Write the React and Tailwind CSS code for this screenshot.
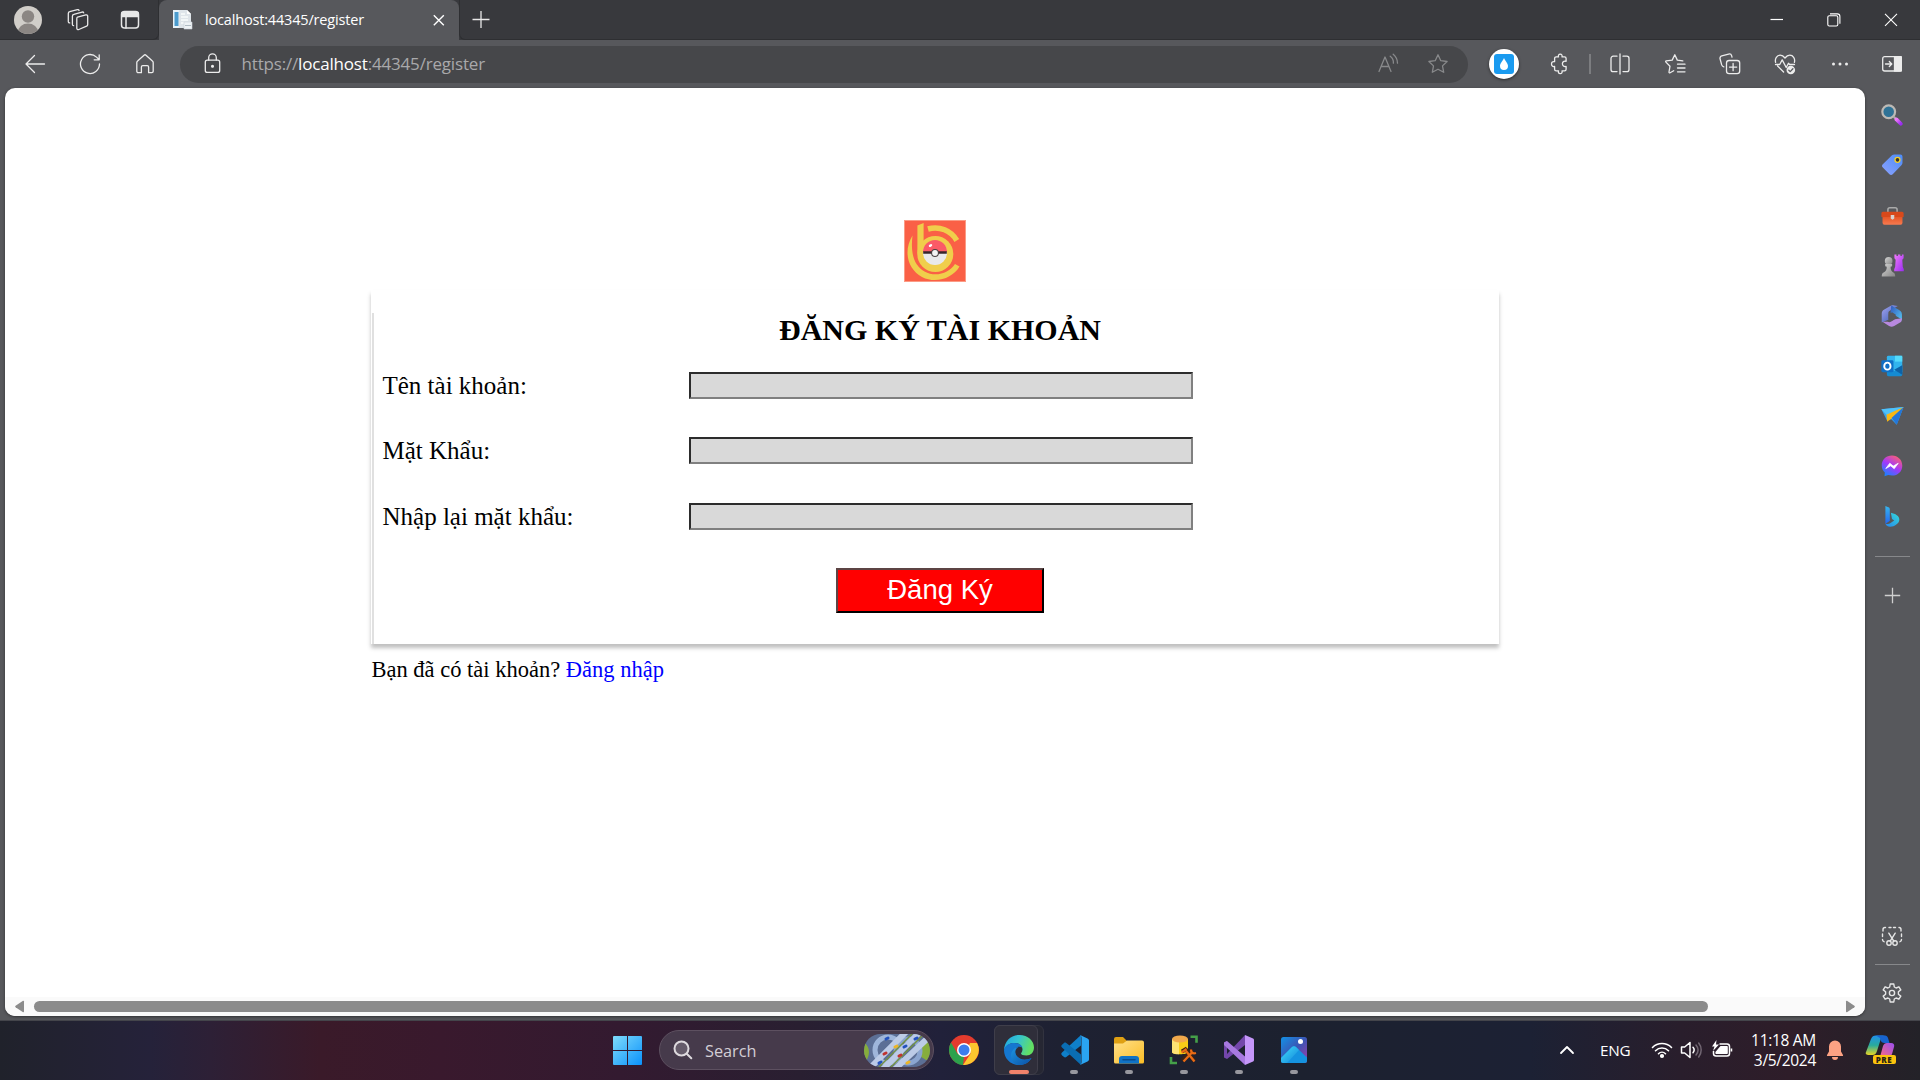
import React from "react";

const Line = ({ size = 22, w = 1.3, children, className = "" }) => (
  <svg width={size} height={size} viewBox="0 0 22 22" fill="none" stroke="currentColor" strokeWidth={w} strokeLinecap="round" strokeLinejoin="round" className={"shrink-0 block " + className}>
    {children}
  </svg>
);

const Art = ({ size = 22, children, className = "" }) => (
  <svg width={size} height={size} viewBox="0 0 30 30" className={"shrink-0 block " + className}>
    {children}
  </svg>
);

const STAR = "M11 1.8l2.8 5.9 6.3.8-4.6 4.4 1.2 6.4L11 16.2l-5.7 3.1 1.2-6.4L1.9 8.5l6.3-.8z";

function TitleBar() {
  return (
    <header className="flex h-10 shrink-0 bg-[#38393d] text-[#e8e8e8]">
      <div className="flex w-[159px] shrink-0 items-center rounded-br-[6px] border-b border-r border-[#2e2f32] pl-[14px]">
        <svg width="28" height="28" viewBox="0 0 28 28" className="block">
          <defs><clipPath id="av"><circle cx="14" cy="14" r="14" /></clipPath></defs>
          <g clipPath="url(#av)">
            <rect width="28" height="28" fill="#d1cec9" />
            <circle cx="14" cy="10.5" r="6.2" fill="#8b8683" />
            <ellipse cx="14" cy="26" rx="10" ry="8.4" fill="#8b8683" />
          </g>
        </svg>
        <Line className="ml-[24.500px]">
          <path d="M10.5 8.1l8.3-2.2c1-.2 1.9.3 1.9 1.2v8.4c0 .8-.4 1.4-1.1 1.7l-7.8 3.3c-1 .4-2-.1-2-1.2V9.700c0-.8.2-1.400.7-1.600z" />
          <path d="M6.600 16.700c-.8 0-1.200-.600-1.200-1.500V7.200c0-1 .5-1.700 1.400-1.900l8.200-2.200c.8-.2 1.500.1 1.700.8" />
          <path d="M2.700 13.900c-.9 0-1.400-.600-1.400-1.500V4.600c0-1 .5-1.700 1.400-1.900l7.700-2c.8-.2 1.500.1 1.700.8" />
        </Line>
        <Line className="ml-[30.500px]" w={1.5}>
          <rect x="2.500" y="2.500" width="17" height="16.500" rx="3" />
          <path d="M3 3.500h16v4H3z" fill="currentColor" />
          <path d="M7 7v12" />
        </Line>
      </div>
      <div className="flex w-[300px] shrink-0 items-center rounded-t-[8px] bg-[#57585c] pl-[13px]">
        <svg width="22" height="22" viewBox="0 0 22 22" className="block">
          <path d="M1 1h9v18H1z" fill="#e8f2f8" />
          <path d="M2.500 3h4v14h-4z" fill="#4b9bcd" />
          <path d="M7 1h8l4 4v14H7z" fill="#dfe5ea" />
          <path d="M15 1l4 4h-4z" fill="#fff" />
          <path d="M9 5h4M9 8h7M9 11h7M9 14h3" stroke="#f9fbfc" strokeWidth="1.500" />
          <path d="M12 13h8v7h-8z" fill="#eef2f5" stroke="#c9d2d9" strokeWidth=".6" />
          <path d="M13 16.500h6" stroke="#aebac2" />
        </svg>
        <span className="ml-[11px] w-[212px] whitespace-nowrap font-['Open_Sans',sans-serif] text-[14.500px] leading-5 tracking-[-0.170px] text-white">localhost:44345/register</span>
        <svg width="14" height="14" viewBox="0 0 14 14" className="ml-[15px] block" stroke="#fff" strokeWidth="1.400"><path d="M1.800 2.300l10 10M11.800 2.300l-10 10" /></svg>
      </div>
      <div className="flex flex-1 items-center rounded-bl-[6px] border-b border-l border-[#2e2f32] pl-[10.500px]">
        <svg width="20" height="20" viewBox="0 0 20 20" stroke="#e8e8e8" strokeWidth="1.300"><path d="M1.500 9.500h17M10 1v17" /></svg>
        <div className="ml-auto mr-px flex h-full">
          <div className="flex w-[57px] items-center justify-center"><svg width="14" height="14" viewBox="0 0 14 14"><path d="M.5 6.500h12.500" stroke="#fff" strokeWidth="1.200" /></svg></div>
          <div className="flex w-[57px] items-center justify-center"><svg width="14" height="14" viewBox="0 0 14 14" fill="none" stroke="#fff" strokeWidth="1.100"><rect x=".8" y="2.800" width="10" height="10.200" rx="1.500" /><path d="M3 .9h7.300a2.600 2.600 0 0 1 2.600 2.600v7.200" /></svg></div>
          <div className="flex w-[57px] items-center justify-center"><svg width="14" height="14" viewBox="0 0 14 14" stroke="#fff" strokeWidth="1.100"><path d="M1 .8l12 12M13 .8l-12 12" /></svg></div>
        </div>
      </div>
    </header>
  );
}

const Cell = ({ children }) => <div className="flex w-[55px] shrink-0 items-center justify-center">{children}</div>;

function ToolBar() {
  return (
    <div className="flex h-12 shrink-0 items-center bg-[#57585c] text-[#ececec]">
      <div className="flex w-[180px] shrink-0 items-center pl-[24px]">
        <Line><path d="M2 11h18.500M10.500 2.500L2 11l8.500 8.500" /></Line>
        <Line className="ml-[33px]"><path d="M20.500 11a9.500 9.500 0 1 1-3-6.900l2.700 2.700M20.200 1.800v5h-5" /></Line>
        <Line className="ml-[33px]"><path d="M2.800 9.600c0-.7.300-1.300.8-1.700l6.400-5.700c.6-.5 1.400-.5 2 0l6.400 5.700c.5.400.8 1 .8 1.700v8.700c0 .8-.6 1.400-1.400 1.400h-3.200V14c0-.8-.6-1.400-1.400-1.400H8.800c-.8 0-1.400.6-1.400 1.400v5.700H4.200c-.8 0-1.400-.6-1.400-1.400z" /></Line>
      </div>
      <div className="flex h-[37px] w-[1288px] shrink-0 items-center rounded-full bg-[#46474a] pl-[21px] pr-[19px]">
        <Line><rect x="4.300" y="7.200" width="14.400" height="12.200" rx="2" /><path d="M7.700 7V4.700a3.800 3.800 0 0 1 7.600 0V7" /><circle cx="11.500" cy="13.300" r=".9" fill="currentColor" /></Line>
        <span className="ml-[18.500px] whitespace-nowrap pb-px font-['Open_Sans',sans-serif] text-[17px] leading-6 tracking-[-0.180px] text-[#a9a9ab]">https://<span className="text-white">localhost</span>:44345/register</span>
        <div className="ml-auto flex items-center gap-[28px] text-[#88898b]">
          <Line><path d="M2 18.500L8 4l6 14.500M4.100 13.500h7.800M13.200 3.200a8 8 0 0 1 3.200 7M16.200 1.200a12 12 0 0 1 4.300 9" /></Line>
          <Line><path d={STAR} /></Line>
        </div>
      </div>
      <div className="ml-[21px] flex h-[30px] w-[30px] shrink-0 items-center justify-center rounded-full bg-white shadow-[0_1px_3px_rgba(0,0,0,0.5)]">
        <div className="flex h-[20px] w-[20px] items-center justify-center rounded-[3px] bg-[#1a9bf0]">
          <svg width="10" height="14" viewBox="0 0 10 14"><path d="M5 1C4 4 1 6 1 9a4 4 0 0 0 8 0C9 6 6 4 5 1z" fill="#fff" /></svg>
        </div>
      </div>
      <div className="ml-[14px] flex">
        <Cell><Line className="mr-[1px]"><path d="M5.600 5.500c0-1 .7-1.600 1.600-1.600h2.300c-.5-1.500.2-2.700 1.700-2.700s2.300 1.200 1.800 2.700h2.500c1 0 1.600.7 1.600 1.600v2.800c-2.300-.6-3.700.6-3.700 2.500s1.500 3.200 3.700 2.600v2.900c0 1-.7 1.600-1.600 1.600H13c.5 1.500-.3 2.700-1.800 2.700s-2.200-1.200-1.700-2.700H7.200c-1 0-1.600-.7-1.600-1.600v-2.900c-2 .6-3.100-.6-3.100-2.300S3.600 8.200 5.600 8.700z" /></Line></Cell>
      </div>
      <div className="ml-px h-5 w-[1.500px] shrink-0 bg-[#7c7d80]" />
      <div className="flex pl-[2px]">
        <Cell><Line><path d="M11 1v20M8 3.200H4.200a2.200 2.200 0 0 0-2.200 2.200v11a2.200 2.200 0 0 0 2.200 2.200H8M14 3.200h3.800A2.200 2.200 0 0 1 20 5.400v11a2.200 2.200 0 0 1-2.200 2.200H14" /></Line></Cell>
        <Cell><Line><path d="M18.800 7.900l-5.500-.8-2.500-5.300-2.600 5.300-5.900.8c-.6.100-.9.700-.4 1.200L6 13.200l-1 5.800c-.1.700.5 1.200 1.100.8l3.600-2M13.500 11.200H21M13.500 15H21M13.500 18.800H21" /></Line></Cell>
        <Cell><Line><rect x="7.500" y="7.500" width="13.200" height="13.200" rx="2.600" /><path d="M14.100 10.500v7.200M10.500 14.100h7.200M4.800 13.800C3.700 13.600 3 12.900 2.700 11.900L1.100 6c-.4-1.400.3-2.700 1.700-3.100l6.800-1.800c1.400-.4 2.700.4 3.100 1.800l.3 1.300" /></Line></Cell>
        <Cell><Line><path d="M1.600 9.400C.6 5.400 3 2.200 6.200 2.200c2.100 0 3.500 1.100 4.800 2.800 1.300-1.700 2.700-2.800 4.800-2.800 3.200 0 5.600 3.200 4.600 7.200M3.600 13l6 6M1.500 11.500h4.200l2.500-4.600 4 7.600 2.300-4.300 1 1.300h5" /><circle cx="16.800" cy="17" r="4.300" fill="currentColor" stroke="none" /><path d="M14.800 17.200l1.400 1.400 2.700-2.900" stroke="#57585c" /></Line></Cell>
        <Cell><svg width="20" height="6" viewBox="0 0 20 6" fill="#ececec"><circle cx="3.500" cy="3" r="1.500" /><circle cx="10" cy="3" r="1.500" /><circle cx="16.500" cy="3" r="1.500" /></svg></Cell>
        <div className="flex w-[50px] shrink-0 items-center justify-center"><Line className="mr-px"><rect x="1.700" y="3.700" width="18.600" height="14.300" rx="2" /><path d="M13.500 3.700h6.800V18h-6.800z" fill="currentColor" /><path d="M4.500 11h6M8.300 8.500l2.500 2.500-2.500 2.500" /></Line></div>
      </div>
    </div>
  );
}

function Logo() {
  return (
    <svg width="62" height="62" viewBox="0 0 62 62" className="block">
      <rect width="62" height="62" fill="#fb9b85" />
      <rect x="1" y="1" width="60" height="60" fill="#fa6046" />
      <path d="M8.500 15.500C-1 31 3.500 49 18 57c14 7.200 31 1 37.500-10.500L51 44C45 53.500 31.500 57.500 20.500 51.500 9.500 45 6.500 33 8.500 15.500z" fill="#f0ce4b" />
      <path d="M24 9c11.500-3.200 23 1.500 28.800 11.500" fill="none" stroke="#f0ce4b" strokeWidth="5.500" />
      <path d="M13.400 5.500L19.600 3v22l-6.200 9z" fill="#f0ce4b" />
      <circle cx="31.300" cy="34" r="18" fill="#f0ce4b" />
      <circle cx="31" cy="33" r="12" fill="#e9e9ea" />
      <path d="M19 32a12 12 0 0 1 24 0z" fill="#fb5b67" />
      <path d="M19.200 32.500h23.600" stroke="#37262a" strokeWidth="2.600" />
      <circle cx="31" cy="33" r="3.900" fill="#4b4243" /><circle cx="31" cy="33" r="2.900" fill="#f4f4f4" />
      <ellipse cx="26.500" cy="25.500" rx="1.900" ry="1.300" transform="rotate(-35 26.500 25.500)" fill="#fff" />
    </svg>
  );
}

const Field = ({ id, label }) => (
  <div className="flex h-[65.300px] items-start">
    <label htmlFor={id} className="w-[306.500px] shrink-0 text-[25px] leading-[29px]">{label}</label>
    <input id={id} className="mt-[1px] h-[27px] w-[504px] rounded-none border-[2.500px] border-t-[#2c2c2c] border-l-[#2c2c2c] border-b-[#808080] border-r-[#808080] bg-[#d9d9d9] outline-none" />
  </div>
);

function RegisterPage() {
  return (
    <main className="ml-[5px] flex h-[928px] w-[1860px] shrink-0 flex-col overflow-hidden rounded-[10px] bg-white font-['Liberation_Serif',serif] text-black shadow-[0_1px_3px_rgba(0,0,0,0.45)]">
      <div className="flex flex-1 flex-col pt-[132px]">
        <div className="flex justify-center"><Logo /></div>
        <div className="ml-[366px] mt-[8px] h-[354px] w-[1128px] pt-[23px] shadow-[0_4px_4px_rgba(0,0,0,0.25)]">
          <form className="ml-[1px] h-[331px] border-l-2 border-[#e0e0e0] pl-[8.500px]">
            <h1 className="ml-[-1.500px] text-center text-[30px] font-bold leading-[34px]">ĐĂNG KÝ TÀI KHOẢN</h1>
            <div className="mt-[24px] h-[196.500px]">
              <Field id="user" label="Tên tài khoản:" />
              <Field id="pass" label="Mặt Khẩu:" />
              <Field id="again" label="Nhập lại mặt khẩu:" />
            </div>
            <button type="button" className="ml-[453.500px] block h-[45px] w-[208px] border-[2.500px] border-b-black border-l-[#5c4444] border-r-black border-t-[#5c4444] bg-[#ff0000] font-['Liberation_Sans',sans-serif] text-[27.500px] leading-[38px] text-white">Đăng Ký</button>
          </form>
        </div>
        <p className="ml-[366.500px] mt-[13px] text-[22.500px] leading-[26px]">Bạn đã có tài khoản? <a className="text-[#0000ff]">Đăng nhập</a></p>
      </div>
      <div className="flex h-[19px] items-center bg-[#fafafa] pl-[9px] pr-[9px]">
        <svg width="11" height="13" viewBox="0 0 11 13" fill="#8b8b8b"><path d="M10 1.500v10c0 .8-.7 1-1.300.6L1.600 7.300a1 1 0 0 1 0-1.600L8.700.9c.6-.4 1.300-.2 1.300.6z" /></svg>
        <div className="ml-[9px] h-[11px] w-[1674px] rounded-full bg-[#8b8b8b]" />
        <svg width="11" height="13" viewBox="0 0 11 13" fill="#8b8b8b" className="ml-auto"><path d="M1 1.500v10c0 .8.7 1 1.300.6l7.100-4.800a1 1 0 0 0 0-1.600L2.300.9C1.700.5 1 .7 1 1.500z" /></svg>
      </div>
    </main>
  );
}

const SideCell = ({ children }) => <div className="flex h-[50.200px] shrink-0 items-center justify-center">{children}</div>;

function Sidebar() {
  return (
    <aside className="flex w-[54px] shrink-0 flex-col pt-[2px] text-[#e6e6e6]">
      <svg width="0" height="0" className="absolute">
        <defs>
          <linearGradient id="pur" x1="0" y1="0" x2="1" y2="1"><stop offset="0" stopColor="#f07bfa" /><stop offset="1" stopColor="#9a2cf0" /></linearGradient>
          <linearGradient id="tag" x1="1" y1="0" x2="0" y2="1"><stop offset="0" stopColor="#4c8cf8" /><stop offset="1" stopColor="#8da2fd" /></linearGradient>
          <linearGradient id="gry" x1="0" y1="0" x2="1" y2="1"><stop offset="0" stopColor="#d4d4d4" /><stop offset="1" stopColor="#858585" /></linearGradient>
          <linearGradient id="org" x1="0" y1="0" x2="0" y2="1"><stop offset="0" stopColor="#e2501f" /><stop offset="1" stopColor="#f77a50" /></linearGradient>
          <linearGradient id="msg" x1=".2" y1="1" x2=".8" y2="0"><stop offset="0" stopColor="#1187ff" /><stop offset=".5" stopColor="#a537fb" /><stop offset="1" stopColor="#ff626d" /></linearGradient>
          <linearGradient id="bing" x1="0" y1="0" x2="0" y2="1"><stop offset="0" stopColor="#36b5ee" /><stop offset="1" stopColor="#2466ef" /></linearGradient>
          <linearGradient id="bing2" x1="0" y1="1" x2="1" y2="0"><stop offset="0" stopColor="#2687ee" /><stop offset="1" stopColor="#35dbd7" /></linearGradient>
          <linearGradient id="m1" x1="0" y1="0" x2="1" y2="1"><stop offset="0" stopColor="#a4a4f0" /><stop offset="1" stopColor="#3458ae" /></linearGradient>
          <linearGradient id="m2" x1="0" y1="0" x2="1" y2="1"><stop offset="0" stopColor="#3156bc" /><stop offset="1" stopColor="#58cdf5" /></linearGradient>
        </defs>
      </svg>
      <SideCell>
        <Art><circle cx="10.500" cy="10.500" r="8.700" fill="#2f7296" stroke="#bdb9b5" strokeWidth="3" /><path d="M17 17l4 4" stroke="#aaa" strokeWidth="3" /><path d="M21 21l6 6" stroke="url(#pur)" strokeWidth="5" strokeLinecap="round" /></Art>
      </SideCell>
      <SideCell>
        <Art><path d="M2.500 14L15 1.800C16 1 17 .7 18 .7h8.500A2.800 2.800 0 0 1 29.300 3.500V12c0 1-.3 2-1.200 3L16 27.500c-1.500 1.500-3 1.500-4.500 0l-9-9c-1.500-1.500-1.500-3 0-4.500z" fill="url(#tag)" /><circle cx="22.500" cy="8" r="3.400" fill="#333" stroke="#f6cf28" strokeWidth="1.800" /></Art>
      </SideCell>
      <SideCell>
        <Art size={23}><path d="M9 11V7.500C9 6 10 5 11.500 5h7C20 5 21 6 21 7.500V11" fill="none" stroke="#aaa" strokeWidth="2" /><rect x="2" y="15" width="26" height="12" rx="2.500" fill="url(#org)" /><path d="M.5 12a2 2 0 0 1 2-2h25a2 2 0 0 1 2 2v5h-29z" fill="#d8491b" /><path d="M12.700 14.500h4.600v4.500l-2.300 1.500-2.300-1.500z" fill="#d9d3d0" /></Art>
      </SideCell>
      <SideCell>
        <Art size={23}><path d="M17.500.5h2.700v2h1.900v-2h3.200v2h1.900v-2h2.300v5l-1.700 2 .6 9 1.300 3.500v2.500H17.200V20l1.300-3.500.6-9-1.600-2z" fill="url(#pur)" /><circle cx="10" cy="9" r="5" fill="url(#gry)" /><path d="M5.500 13h9v3l-2 .5c0 4 1 6 3.500 7.500 2 1 2.500 2 2.500 5.500H1c0-3.500.5-4.500 2.500-5.500C6.500 22.500 7.500 20.500 7.500 16.500l-2-.5z" fill="url(#gry)" /></Art>
      </SideCell>
      <SideCell>
        <Art><path d="M14 .8L4.500 6C2 7.500 1 9 1 12v12l9-4V11c0-1.500.6-2.500 2-3.300L23 1.500 18.500.6C17 .2 15.500.2 14 .8z" fill="url(#m1)" /><path d="M14 .8l9 5c3 1.700 5.500 3 5.500 7.200v10c0-3-1.500-4-4-5.500l-11.500-7z" fill="url(#m2)" /><path d="M2 23l9 5.500c2.500 1.500 4.500 1.500 7 0l8-4.500c2-1.200 2.500-3 2.500-6l-9.500 1.500-5.500 3.500c-1.500.9-2.700.9-4.500 0z" fill="#b889e0" /><path d="M15 10l5 2.800v5.500l-5 3-4.500-2.800v-5.700z" fill="#57585c" /></Art>
      </SideCell>
      <SideCell>
        <Art><rect x="8" y="1" width="21" height="24" rx="2" fill="#32b4ee" /><path d="M19 1h10v8H19z" fill="#54dafa" /><path d="M8 16l10.500 6L29 14v13a2 2 0 0 1-2 2H10a2 2 0 0 1-2-2z" fill="#158bd2" /><path d="M29 14v13L18 20z" fill="#0e62a6" /><rect x=".5" y="7" width="16.500" height="16.500" rx="2" fill="#0f6fc6" /><ellipse cx="8.700" cy="15.200" rx="4.300" ry="4.800" fill="none" stroke="#fff" strokeWidth="2.600" /></Art>
      </SideCell>
      <SideCell>
        <Art size={23} className="mb-[2px]"><path d="M.5 7l29-3-9 23-7-7-6 1z" fill="#36a3ee" /><path d="M29.500 4L7 12.500l1 10.500 7-5z" fill="#f7b714" /><path d="M29.500 4L14 18l6.500 9z" fill="#2476d8" /><path d="M.5 7l29-3L7 14z" fill="#4fc2fa" /></Art>
      </SideCell>
      <SideCell>
        <Art><path d="M15 .8C7 .8 1 6.500 1 14.200c0 4 1.600 7.200 4.200 9.500L4.800 29l5-1.700c1.600.4 3.400.7 5.200.7 8 0 14-5.700 14-13.500S23 .8 15 .8z" fill="url(#msg)" /><path d="M6.500 18.500l5.500-7.300 4.700 3.900 6.800-3.800-5.500 7.400-4.800-3.900z" fill="#fff" stroke="#fff" strokeWidth="1" /></Art>
      </SideCell>
      <SideCell>
        <Art className="mb-[2px]"><path d="M6 1.500l4 1.500c1.500.5 2 1.500 2 3v15.500l-6 4.500z" fill="url(#bing)" /><path d="M13.500 10.500c6 1.500 11.500 4 11.500 9.500 0 5-7 9.500-12 9.500-4 0-7-2-7-5 0 2.500 5 1.500 7 0l5-3.500-3-2z" fill="url(#bing2)" /></Art>
      </SideCell>
      <div className="mt-[14px] h-px w-[35px] self-center bg-[#87888b]" />
      <div className="mt-[30px] flex justify-center"><svg width="17" height="17" viewBox="0 0 17 17" stroke="#cfcfcf" strokeWidth="1.300"><path d="M.8 8.500h15.400M8.500.8v15.400" /></svg></div>
      <div className="mt-auto flex h-[57px] items-center justify-center">
        <Line w={1.400}><path d="M2 6V4.500C2 3.300 2.800 2.500 4 2.500h.5M8 2.500h2M12.500 2.500h2M18 2.500c1.200 0 2 .8 2 2V6M20.500 9v2.500M20.500 14.500c0 1.200-.5 1.900-1.500 2.200M1.500 9v2.500M1.500 14.500c0 1.200.5 1.900 1.500 2.200M7.800 8.200l5 8M14.200 8.200l-5 8" /><circle cx="8" cy="18" r="2.200" /><circle cx="14" cy="18" r="2.200" /></Line>
      </div>
      <div className="h-px w-[35px] self-center bg-[#87888b]" />
      <div className="flex h-[55px] items-center justify-center">
        <Line w={1.400}><path d="M9.200 1h3.600l.5 3 1.800 1 2.800-1.200 1.900 3.100-2.400 1.900v2.400l2.400 1.900-1.900 3.100-2.800-1.200-1.800 1-.5 3H9.200l-.5-3-1.800-1-2.800 1.200-1.900-3.100 2.400-1.900V8.800L2.200 6.900l1.900-3.100L6.900 5l1.800-1z" transform="translate(0 1)" /><circle cx="11" cy="11" r="2.600" /></Line>
      </div>
    </aside>
  );
}

const TaskItem = ({ children, running }) => (
  <div className="flex h-full w-[55px] shrink-0 flex-col items-center pt-[14px]">
    {children}
    {running && <div className="mt-[5px] h-1 w-2 rounded-full bg-[#97979e]" />}
  </div>
);

function RoadArt() {
  return (
    <svg width="66" height="33" viewBox="0 0 66 33" className="block rounded-full">
      <rect width="66" height="33" fill="#5c6f95" />
      <path d="M0 8q10 9 0 22zM52 16q4-8 14-9v20q-10-2-14-11z" fill="#86ad3c" />
      <circle cx="24" cy="16" r="13" fill="none" stroke="#9fb6da" strokeWidth="5" />
      <circle cx="44" cy="17" r="12" fill="none" stroke="#8ba5cf" strokeWidth="5" />
      <path d="M6 34L42-2M18 36L56-2M30 36L66 2" stroke="#bccbe6" strokeWidth="6" />
      <path d="M12 36L50-2M24 36L62-2" stroke="#75923f" strokeWidth="1.400" />
      <g strokeWidth="3" strokeLinecap="round">
        <path d="M15 29l2-1M22 5l2-1M40 13l2-1M51 5l2-1" stroke="#2352be" />
        <path d="M20 20l2-1M35 22l2-1" stroke="#bf3430" />
        <path d="M31 13l2-1M43 29l2-1" stroke="#edb526" />
      </g>
    </svg>
  );
}

function Taskbar() {
  return (
    <footer className="flex h-[60px] shrink-0 border-t border-[#44454b] bg-[linear-gradient(90deg,#20222b_0px,#25223a_150px,#2d2036_210px,#3a1a29_320px,#39192d_440px,#331a30_620px,#291f31_800px,#21213a_940px,#1e2132_1060px,#1c212f_1300px,#1c2134_1530px,#291e2c_1680px,#2e1d29_1790px,#232228_1920px)] font-['Open_Sans',sans-serif] text-white">
      <svg width="0" height="0" className="absolute">
        <defs>
          <linearGradient id="win" x1="0" y1="0" x2="1" y2="1"><stop offset="0" stopColor="#7fdcfb" /><stop offset="1" stopColor="#0a91fb" /></linearGradient>
          <linearGradient id="e1" x1="0" y1="0" x2="1" y2=".3"><stop offset="0" stopColor="#1fa4e4" /><stop offset=".5" stopColor="#35c4cf" /><stop offset="1" stopColor="#62df63" /></linearGradient>
          <linearGradient id="e2" x1="0" y1="0" x2="1" y2="1"><stop offset="0" stopColor="#1c94e0" /><stop offset="1" stopColor="#0b4fa4" /></linearGradient>
          <linearGradient id="fold" x1="0" y1="0" x2="1" y2="1"><stop offset="0" stopColor="#ffe08a" /><stop offset="1" stopColor="#fbbd25" /></linearGradient>
          <linearGradient id="ph" x1="0" y1="0" x2="1" y2="1"><stop offset="0" stopColor="#1292e6" /><stop offset=".5" stopColor="#3b55b4" /><stop offset="1" stopColor="#a33caa" /></linearGradient>
          <linearGradient id="ph2" x1="0" y1="0" x2="1" y2="1"><stop offset="0" stopColor="#42dcfb" /><stop offset="1" stopColor="#1184d8" /></linearGradient>
          <linearGradient id="cp1" x1="0" y1="0" x2="0" y2="1"><stop offset="0" stopColor="#2190ea" /><stop offset=".5" stopColor="#28aa9c" /><stop offset="1" stopColor="#e7d524" /></linearGradient>
          <linearGradient id="cp2" x1="1" y1="0" x2="0" y2="1"><stop offset="0" stopColor="#9a4ff0" /><stop offset="1" stopColor="#fa6b82" /></linearGradient>
        </defs>
      </svg>
      <div className="flex w-[659px] shrink-0 pl-[613px] pt-[15px]">
        <svg width="29" height="29" viewBox="0 0 29 29" fill="url(#win)">
          <path d="M1 0h13v14H0V1a1 1 0 0 1 1-1zM15 0h13a1 1 0 0 1 1 1v13H15zM0 15h14v14H1a1 1 0 0 1-1-1zM15 15h14v13a1 1 0 0 1-1 1H15z" />
        </svg>
      </div>
      <div className="mt-[9px] flex h-[40px] w-[275px] shrink-0 items-center rounded-full border border-[#5d5060] bg-[#463a4b] pl-[13px] pr-[3px]">
        <svg width="20" height="20" viewBox="0 0 20 20" fill="none" stroke="#dedade" strokeWidth="2" strokeLinecap="round"><circle cx="8.500" cy="8.500" r="7" fill="#655b6a" /><path d="M13.700 13.700l4.600 4.600" /></svg>
        <span className="ml-[12px] pt-px text-[16.300px] leading-5 text-[#d3ced5]">Search</span>
        <div className="ml-auto"><RoadArt /></div>
      </div>
      <div className="ml-[2px] flex">
        <TaskItem>
          <Art size={30}><circle cx="15" cy="15" r="15" fill="#e33b2e" /><path d="M2 7.500L8.500 18.700 15 21.500l-1 8.500A15 15 0 0 1 2 7.500z" fill="#2ca24c" /><path d="M28 8a15 15 0 0 1-14 22l7.500-11.300L20 10l1-2z" fill="#fcc62e" /><circle cx="15" cy="15" r="7" fill="#fff" /><circle cx="15" cy="15" r="5.500" fill="#3b7ded" /></Art>
        </TaskItem>
        <div className="flex w-[55px] shrink-0 pl-[3px] pt-[4px]">
          <div className="h-[50px] w-[50px] rounded-[6px] border border-[#32333f] bg-[#262733]">
            <div className="-ml-px -mt-px flex h-[50px] w-[44px] flex-col items-start rounded-[6px] border border-[#3f3e4a] bg-[#2f2e3a] pl-[9px] pt-[9px]">
              <Art size={30}>
                <path d="M0 15C.5 6 7 0 15.500 0 24 0 30 6 30 12.500c0 5-3.500 8-7.500 8-3.500 0-5.500-1-5.500-2 0-.8 1.500-1.500 1.500-4C18.500 11 15 8 10.500 8 5 8 1.500 11.500 0 15z" fill="url(#e1)" />
                <path d="M0 15c1-4.500 5-7 10.500-7 4 0 7 2 8 4.500-7-2.500-9 3-6.500 7.500 3 5 9.500 6 15.500 3C25 27.500 20.500 30 15 30 6.500 30 0 23.500 0 15z" fill="#1577d0" />
                <path d="M14.500 12c-3 2-4 5-2.500 8 3 5 9.500 6 15.500 3-2.500 4.500-7 7-12.500 7-5 0-8-4.500-8-9 0-5 3.500-8.500 7.500-9z" fill="url(#e2)" />
              </Art>
              <div className="ml-[5px] mt-[5px] h-1 w-5 shrink-0 rounded-full bg-[#f1826b]" />
            </div>
          </div>
        </div>
        <TaskItem running>
          <Art size={30}><path d="M22 0L3 17.500c-1 1-1 1.800 0 2.700L5 22c.8.600 1.500.5 2.300 0L22 10.500z" fill="#0f7fc9" /><path d="M22 30L3 12.500c-1-1-1-1.800 0-2.700L5 8c.8-.6 1.500-.5 2.300 0L22 19.500z" fill="#0a6db3" /><path d="M21 0l7.500 3.500c1 .5 1.500 1.200 1.500 2.200v18.600c0 1-.5 1.700-1.500 2.200L21 30c1-.6 1.500-1.500 1.500-3V3c0-1.500-.5-2.400-1.500-3z" fill="#2aa4f2" /></Art>
        </TaskItem>
        <TaskItem running>
          <Art size={30}><path d="M0 4a2 2 0 0 1 2-2h7l4 4h15v6H0z" fill="#dfa013" /><path d="M0 8.500h9l4-3h15a2 2 0 0 1 2 2V27a1.500 1.500 0 0 1-1.500 1.500h-27A1.500 1.500 0 0 1 0 27z" fill="url(#fold)" /><path d="M5 28.500V24a3 3 0 0 1 3-3h14a3 3 0 0 1 3 3v4.500z" fill="#1073c6" /><path d="M9 24.800h12" stroke="#0a4c8d" strokeWidth="1.500" strokeLinecap="round" /></Art>
        </TaskItem>
        <TaskItem running>
          <Art size={30}><path d="M3 4v13c0 3 16 3 16 0V4z" fill="#f8cd16" /><path d="M3 4v13c0 1.500 3 2.300 7 2.300V4z" fill="#fde374" /><ellipse cx="11" cy="4" rx="8" ry="3.500" fill="#f1a94c" /><path d="M21.500 1.800h6v6M2 22v6h6" fill="none" stroke="#45a049" strokeWidth="2.600" /><path d="M13 25.500L23.500 15M17 14.500l8.500 11.500M13 16.500l5-3" stroke="#3a2114" strokeWidth="4" /><path d="M14.500 26.500L23 17.500M17 16l8.500 10.500M12.500 17.500l5-3.500M22 14.500c0 3 1.500 4.500 5 3.500" stroke="#e96b15" strokeWidth="2.300" fill="none" /></Art>
        </TaskItem>
        <TaskItem running>
          <Art size={30}><path d="M21 0v10L3 24l-3-1.500V7.500L3 6v13z" fill="#7347ab" /><path d="M0 7.500L3 6l18 15.500V30L0 10z" fill="#a779e0" /><path d="M21 0l7.500 3.300c1 .4 1.500 1 1.500 2v19.400c0 1-.5 1.600-1.500 2L21 30z" fill="#c597fa" /></Art>
        </TaskItem>
        <TaskItem running>
          <Art size={30}><rect x="2" y="2" width="26" height="26" rx="2.500" fill="url(#ph)" /><path d="M2 23L12.500 12.500c1.700-1.600 3.300-1.600 5 0L28 22.500v3a2.500 2.500 0 0 1-2.500 2.500h-21A2.500 2.500 0 0 1 2 25.500z" fill="#1593e0" /><path d="M2 23l10.500-10.500c1.700-1.600 3.300-1.600 5 0L20 15 8 28H4.500A2.500 2.500 0 0 1 2 25.500z" fill="url(#ph2)" /><circle cx="21.500" cy="6.500" r="2.500" fill="#fff" /></Art>
        </TaskItem>
      </div>
      <div className="ml-auto flex h-full items-center pb-[1px]">
        <svg width="16" height="10" viewBox="0 0 16 10" fill="none" stroke="#fff" strokeWidth="1.800" strokeLinecap="round" strokeLinejoin="round"><path d="M2 8l6-6 6 6" /></svg>
        <span className="ml-[25px] w-[51px] text-[15.300px] leading-5 tracking-[-0.300px]">ENG</span>
        <svg width="22" height="20" viewBox="0 0 22 20" fill="none" stroke="#fff" strokeWidth="1.600" strokeLinecap="round"><path d="M1.500 7.500a13.400 13.400 0 0 1 19 0M4.500 10.700a9.200 9.200 0 0 1 13 0M7.500 13.700a5 5 0 0 1 7 0" /><circle cx="11" cy="16" r="1.300" fill="#fff" /></svg>
        <svg width="22" height="20" viewBox="0 0 22 20" fill="none" stroke="#fff" strokeWidth="1.500" strokeLinecap="round" strokeLinejoin="round" className="ml-[7px] mr-px"><path d="M1.500 7h3.200L10 2.500v15L4.700 13H1.500zM13 7.300c1.300 1.500 1.300 3.900 0 5.400" /><path d="M16 5c2.500 3 2.500 7 0 10M18.700 3c3.300 4 3.300 10 0 14" stroke="#716672" /></svg>
        <svg width="22" height="20" viewBox="0 0 22 20" fill="none" stroke="#fff" strokeWidth="1.500" strokeLinejoin="round" className="ml-[8px]"><path d="M8.500 4H16a2.500 2.500 0 0 1 2.500 2.500v7A2.500 2.500 0 0 1 16 16H5a2.500 2.500 0 0 1-2.500-2.500V11M20.500 8.500v3" /><path d="M9.500 6H16a.8.800 0 0 1 .8.800v6.400a.8.800 0 0 1-.8.800H5.200a.8.800 0 0 1-.8-.8V12z" fill="#fff" stroke="none" /><path d="M5.500 0L1 6.500h2.500L2 11l6-6.500H5z" fill="#fff" stroke="none" /></svg>
        <div className="w-[83px] text-right text-[15.500px] leading-5 tracking-[-0.300px] whitespace-nowrap"><div>11:18 AM</div><div>3/5/2024</div></div>
        <svg width="18" height="20" viewBox="0 0 18 20" className="ml-[10px]" fill="#fda283"><path d="M9 .5a6 6 0 0 0-6 6v5L1 15c-.2.600 0 1 .6 1h14.800c.6 0 .8-.4.6-1l-2-3.500v-5a6 6 0 0 0-6-6zM6 17h6a3 3 0 0 1-6 0z" /></svg>
        <div className="relative ml-[20.500px] mr-[24.500px] h-[30px] w-[31px]">
          <svg width="31" height="30" viewBox="0 0 31 30"><path d="M1 17L6 4c1-2.500 2.500-3.500 5-3.500h9c-2 0-3.500 1.500-4.200 3.500L12 16c-1 3-2.500 4-4.500 4H4c-2.500 0-4-1-3-3z" fill="url(#cp1)" /><path d="M11 .5h9c1.500 0 2.500 1 3 2.500L24.500 8H20c-2.500 0-4-.5-5-5z" fill="#1763cf" /><path d="M18 11c.8-2 2-3 4-3h4c2.500 0 3.700 1.500 3 4l-2 7c-.8 2-2 3-4 3h-8z" fill="url(#cp2)" /></svg>
          <span className="absolute left-[8px] top-[20px] flex h-[9px] w-[23px] items-center justify-center rounded-[2px] bg-[#fcc30d] text-[8px] font-extrabold leading-none tracking-[0.600px] text-[#2a2413]">PRE</span>
        </div>
      </div>
    </footer>
  );
}

export default function App() {
  return (
    <div className="flex h-[1080px] w-[1920px] flex-col overflow-hidden bg-[#57585c]">
      <TitleBar />
      <ToolBar />
      <div className="flex h-[932px] shrink-0">
        <RegisterPage />
        <Sidebar />
      </div>
      <Taskbar />
    </div>
  );
}
